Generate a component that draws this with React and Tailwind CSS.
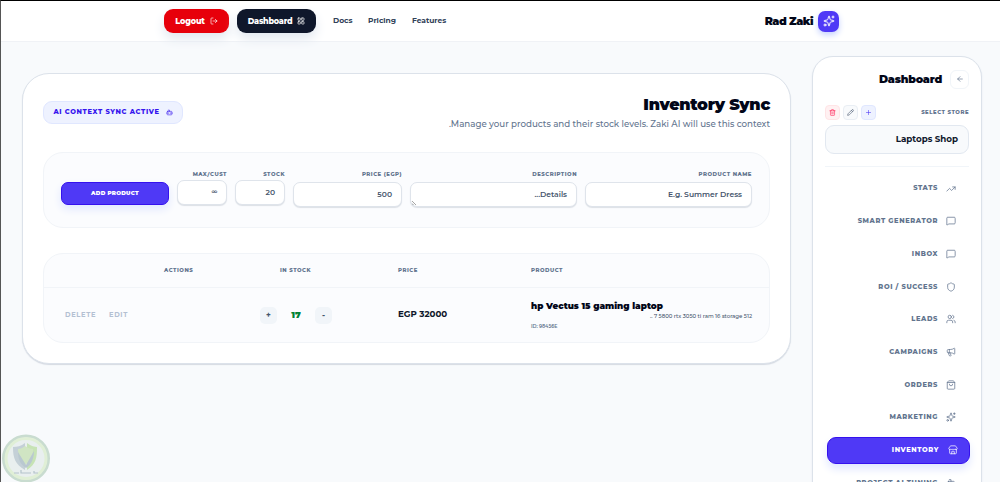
import {
  LogOut, LayoutGrid, Sparkles, ArrowLeft, Trash2, Pencil, Plus, TrendingUp, MessageSquare,
  Shield, Users, Megaphone, ShoppingBag, Store, Bot,
} from "lucide-react";

const navItems = [
  { label: "STATS", icon: TrendingUp },
  { label: "SMART GENERATOR", icon: MessageSquare },
  { label: "INBOX", icon: MessageSquare },
  { label: "ROI / SUCCESS", icon: Shield },
  { label: "LEADS", icon: Users },
  { label: "CAMPAIGNS", icon: Megaphone },
  { label: "ORDERS", icon: ShoppingBag },
  { label: "MARKETING", icon: Sparkles },
  { label: "INVENTORY", icon: Store, active: true },
  { label: "PROJECT AI TUNING", icon: Bot },
];

function Header() {
  return (
    <header className="flex h-[41px] shrink-0 items-center border-b border-[#f0f2f6] bg-white pl-[163px]">
      <button className="flex h-6 w-[65px] items-center justify-center gap-[5px] rounded-[9px] bg-[#e7000b] text-[8px] font-extrabold tracking-[-0.1px] text-white shadow-[0_6px_12px_#e2e8f0]">
        Logout <LogOut size={8} />
      </button>
      <button className="ml-2 flex h-6 w-[79px] items-center justify-center gap-[5px] rounded-[9px] bg-[#0f172b] text-[8px] font-extrabold tracking-[-0.2px] text-white shadow-[0_6px_12px_#e2e8f0]">
        Dashboard <LayoutGrid size={8} />
      </button>
      <nav className="ml-[17px] flex gap-4 text-[7.5px] font-bold text-[#314158]">
        <span className="w-[19px] whitespace-nowrap">Docs</span>
        <span className="w-[28px] whitespace-nowrap">Pricing</span>
        <span className="whitespace-nowrap">Features</span>
      </nav>
      <div className="mr-[161px] ml-auto flex items-center gap-[5px]">
        <span className="text-[11px] font-black tracking-[-0.5px] text-[#020618]">Rad Zaki</span>
        <span className="flex h-[21px] w-[21px] items-center justify-center rounded-[7px] bg-[#4f39f6] text-white shadow-[0_3px_6px_#c6d2ff]">
          <Sparkles size={12} />
        </span>
      </div>
    </header>
  );
}

function Field({ label, value, width, tall, grip }) {
  return (
    <div className={`flex shrink-0 flex-col items-end ${width}`}>
      <span className="h-2 text-[5.4px] leading-[8px] font-extrabold tracking-[0.5px] whitespace-nowrap text-[#62748e]">{label}</span>
      <div className={`relative flex h-[25px] w-full items-center justify-end rounded-[7px] border border-[#dfe4eb] bg-white pr-[9px] text-[7.6px] font-semibold text-[#45556c] shadow-[0_1px_1px_#dce0e6] ${tall}`}>
        {value}
        {grip && (
          <svg className="absolute bottom-px left-px" width="4" height="4" viewBox="0 0 4 4" stroke="#666" strokeWidth=".6">
            <path d="M0 0 4 4M0 2.5 1.5 4" />
          </svg>
        )}
      </div>
    </div>
  );
}

function ProductForm() {
  return (
    <section className="mt-[27px] flex h-[76px] shrink-0 rounded-[20px] border border-[#f1f4f8] bg-[#fbfcfe] pt-[17px] pl-[17px]">
      <button className="mt-[12px] mr-2 h-[23px] w-[108px] shrink-0 rounded-[7px] border border-[#3511ee] bg-[#4f39f6] text-[5.6px] font-black tracking-[0.25px] text-white shadow-[0_4px_8px_#e0e7ff]">
        ADD PRODUCT
      </button>
      <div className="flex gap-2">
        <Field label="MAX/CUST" value={<span className="text-[6px]">∞</span>} width="w-[50px]" tall="mt-[2px]" />
        <Field label="STOCK" value="20" width="w-[50px]" tall="mt-[2px]" />
        <Field label="PRICE (EGP)" value="500" width="w-[109px]" tall="mt-[4px]" />
        <Field label="DESCRIPTION" value="...Details" width="w-[167px]" tall="mt-[4px]" grip />
        <Field label="PRODUCT NAME" value="E.g. Summer Dress" width="w-[167px]" tall="mt-[4px]" />
      </div>
    </section>
  );
}

function ProductTable() {
  const columns = "grid grid-cols-[121px_95px_118px_133px_1fr]";
  return (
    <section className="mt-[25px] h-[90px] shrink-0 rounded-[20px] border border-[#f1f4f8] bg-[#fbfcfe]">
      <div className={`${columns} h-[34px] items-center border-b border-[#f1f4f8] text-[5.4px] font-extrabold tracking-[0.5px] text-[#62748e]`}>
        <span className="pl-[120px]">ACTIONS</span>
        <span />
        <span className="pl-[20px]">IN STOCK</span>
        <span className="pl-[20px]">PRICE</span>
        <span className="pl-[20px]">PRODUCT</span>
      </div>
      <div className={`${columns} h-[54px] items-center`}>
        <div className="flex gap-[13px] pl-[21px] text-[6.7px] font-bold tracking-[0.65px] text-[#b3c0d2]">
          <span>DELETE</span>
          <span>EDIT</span>
        </div>
        <span />
        <div className="flex items-center">
          <span className="flex h-[17px] w-[17px] items-center justify-center rounded-[5px] bg-[#f1f5f9] text-[8px] font-bold text-[#45556c]">+</span>
          <span className="w-[38px] text-center text-[9px] font-black text-[#008236]">17</span>
          <span className="flex h-[17px] w-[17px] items-center justify-center rounded-[5px] bg-[#f1f5f9] text-[8px] font-bold text-[#45556c]">-</span>
        </div>
        <span className="pl-[20px] text-[8.7px] font-bold text-[#0f172b]">EGP 32000</span>
        <div className="flex flex-col pr-[17px] pl-[20px]">
          <span className="text-[8.8px] leading-[11px] font-black whitespace-nowrap text-[#020618]">hp Vectus 15 gaming laptop</span>
          <span className="self-end text-[5.4px] leading-[10px] font-medium whitespace-nowrap text-[#45556c]">.. 7 5800 rtx 3050 ti ram 16 storage 512</span>
          <span className="text-[4.8px] leading-[10px] font-semibold text-[#62748e]">ID: 98456E</span>
        </div>
      </div>
    </section>
  );
}

function InventoryPanel() {
  return (
    <main className="mt-[31px] ml-[21px] flex h-[291px] w-[769px] shrink-0 flex-col rounded-[27px] border border-[#dce2ea] bg-white px-5 shadow-[0_1px_1px_#d5dae2]">
      <div className="flex h-[51px] shrink-0 justify-between">
        <div className="mt-[27px] flex h-[23px] w-[140px] items-center justify-center gap-[6px] rounded-[9px] border border-[#e0e7ff] bg-[#eef2ff] text-[6.7px] font-extrabold tracking-[0.65px] whitespace-nowrap text-[#3514ee]">
          AI CONTEXT SYNC ACTIVE <Bot size={7} />
        </div>
        <div className="flex flex-col items-end">
          <h1 className="mt-[20px] text-[16px] leading-[22px] font-black tracking-[-0.3px] whitespace-nowrap text-[#020618]">Inventory Sync</h1>
          <p className="text-[8.7px] leading-[17px] font-medium whitespace-nowrap text-[#62748e]">.Manage your products and their stock levels. Zaki AI will use this context</p>
        </div>
      </div>
      <ProductForm />
      <ProductTable />
    </main>
  );
}

function NavItem({ label, icon: Icon, active }) {
  return (
    <div
      className={
        active
          ? "flex h-[27px] w-[143px] shrink-0 items-center justify-end gap-[9px] rounded-[9px] border border-[#3511ee] bg-[#4f39f6] pr-[11px] text-white shadow-[0_5px_9px_#e0e7ff]"
          : "flex h-[27px] w-[143px] shrink-0 items-center justify-end gap-[8px] pr-[14px] text-[#62748e]"
      }
    >
      <span className="text-[6.7px] font-extrabold tracking-[0.6px] whitespace-nowrap">{label}</span>
      <Icon size={10} strokeWidth={1.8} />
    </div>
  );
}

function Sidebar() {
  return (
    <aside className="mt-[14px] ml-[21px] flex h-[460px] w-[170px] shrink-0 flex-col rounded-[21px] border border-[#dce2ea] bg-white px-3 shadow-[0_1px_2px_#e2e8f0]">
      <div className="mt-3 flex h-[20px] shrink-0 items-center justify-end gap-2">
        <h2 className="text-[11px] font-black tracking-[-0.2px] text-[#020618]">Dashboard</h2>
        <span className="flex h-[19px] w-[19px] items-center justify-center rounded-[6px] border border-[#f1f5f9] text-[#62748e]">
          <ArrowLeft size={8} />
        </span>
      </div>
      <div className="mt-4 flex h-[15px] shrink-0 items-center gap-[3px]">
        <span className="flex h-[15px] w-[15px] items-center justify-center rounded-[4px] border border-[#ffe4e6] bg-[#fff1f2] text-[#ff2056]"><Trash2 size={7} /></span>
        <span className="flex h-[15px] w-[15px] items-center justify-center rounded-[4px] border border-[#e9eef4] bg-[#f8fafc] text-[#45556c]"><Pencil size={7} /></span>
        <span className="flex h-[15px] w-[15px] items-center justify-center rounded-[4px] border border-[#e0e7ff] bg-[#eef2ff] text-[#4f39f6]"><Plus size={7} /></span>
        <span className="ml-auto text-[5.4px] font-extrabold tracking-[0.5px] whitespace-nowrap text-[#62748e]">SELECT STORE</span>
      </div>
      <div className="mt-[5px] flex h-[29px] shrink-0 items-center justify-end rounded-[9px] border border-[#e2e8f0] bg-[#f8fafc] pr-[10px] text-[8.7px] font-bold text-[#0f172b]">
        Laptops Shop
      </div>
      <div className="mt-3 h-px shrink-0 bg-[#f1f5f9]" />
      <nav className="mt-2 ml-[2px] flex flex-col gap-[5.7px]">
        {navItems.map((item) => <NavItem key={item.label} {...item} />)}
      </nav>
    </aside>
  );
}

function ShieldBadge() {
  return (
    <svg className="absolute top-[433px] left-0" width="50" height="49" viewBox="0 0 50 49">
      <circle cx="25" cy="24.5" r="22.5" fill="#e9efef" stroke="#c9dcd0" strokeWidth="3" />
      <circle cx="25" cy="24.5" r="20" fill="none" stroke="#e0efd6" strokeWidth="3" />
      <path d="M24 9c-4 3-8 4-12 4 0 11 2 17 12 23Z" fill="#c4d0d7" />
      <path d="M26 9c4 3 8 4 10 4 0 11-1 17-10 23Z" fill="#c7e3b5" />
      <path d="M17 15c2 0 5-1 7-3 3 2 5 3 8 3 0 7-2 12-8 16-5-4-7-9-7-16Z" fill="#d0e5c3" />
      <path d="m17 18 8 13 8-14c0 8-3 14-8 17-5-3-8-8-8-16Z" fill="#b9c8d0" />
      <path d="M13 39h5m2-3v3h10m3-2v2h4" stroke="#b5c4cb" strokeWidth="1.2" fill="none" />
    </svg>
  );
}

export default function App() {
  return (
    <div className="relative flex h-[482px] w-[1000px] flex-col overflow-hidden border-t border-l border-t-black border-l-[#555] bg-[#f8fafc] font-['Montserrat','Inter',sans-serif]">
      <Header />
      <div className="flex min-h-0 flex-1 items-start">
        <InventoryPanel />
        <Sidebar />
      </div>
      <ShieldBadge />
    </div>
  );
}
